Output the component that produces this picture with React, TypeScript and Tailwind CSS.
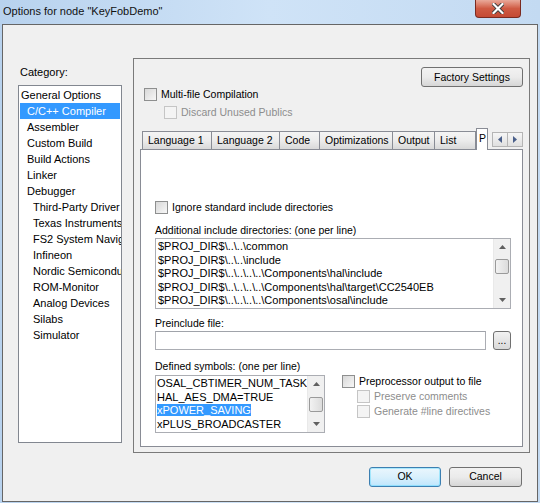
import React from 'react';

const font = { fontFamily: '"Liberation Sans", Arial, sans-serif' };

function Check({ disabled = false }: { disabled?: boolean }) {
  return (
    <span
      className={
        'block w-[13px] h-[13px] border shrink-0 ' +
        (disabled
          ? 'border-[#c5c5c5] bg-[#f4f4f4]'
          : 'border-[#8e8f8f] bg-gradient-to-br from-[#d8d8d8] to-[#f7f7f7]')
      }
    />
  );
}

function ScrollBar({ thumbTop, thumbH }: { thumbTop: number; thumbH: number }) {
  return (
    <div className="w-[17px] h-full bg-[#f0f0f0] border-l border-[#e9e9e9] flex flex-col items-center shrink-0">
      <div className="h-[16px] w-full flex items-center justify-center">
        <svg width="7" height="4" viewBox="0 0 7 4">
          <path d="M0 4 L3.5 0 L7 4 Z" fill="#606060" />
        </svg>
      </div>
      <div className="flex-1 w-full relative">
        <div
          className="absolute left-[1px] right-[1px] rounded-[2px] border border-[#9a9a9a] bg-gradient-to-r from-[#f2f2f2] to-[#dcdcdc]"
          style={{ top: thumbTop, height: thumbH }}
        />
      </div>
      <div className="h-[16px] w-full flex items-center justify-center">
        <svg width="7" height="4" viewBox="0 0 7 4">
          <path d="M0 0 L3.5 4 L7 0 Z" fill="#606060" />
        </svg>
      </div>
    </div>
  );
}

const categories: [string, number][] = [
  ['General Options', 0],
  ['C/C++ Compiler', 1],
  ['Assembler', 1],
  ['Custom Build', 1],
  ['Build Actions', 1],
  ['Linker', 1],
  ['Debugger', 1],
  ['Third-Party Driver', 2],
  ['Texas Instruments', 2],
  ['FS2 System Navigator', 2],
  ['Infineon', 2],
  ['Nordic Semiconductor', 2],
  ['ROM-Monitor', 2],
  ['Analog Devices', 2],
  ['Silabs', 2],
  ['Simulator', 2],
];

const tabs: [string, string][] = [
  ['Language 1', 'w-[70px]'],
  ['Language 2', 'w-[69px]'],
  ['Code', 'w-[41px]'],
  ['Optimizations', 'w-[74px]'],
  ['Output', 'w-[43px]'],
  ['List', 'w-[42px]'],
];

const includes = [
  '$PROJ_DIR$\\..\\..\\common',
  '$PROJ_DIR$\\..\\..\\include',
  '$PROJ_DIR$\\..\\..\\..\\..\\Components\\hal\\include',
  '$PROJ_DIR$\\..\\..\\..\\..\\Components\\hal\\target\\CC2540EB',
  '$PROJ_DIR$\\..\\..\\..\\..\\Components\\osal\\include',
];

const symbols = ['OSAL_CBTIMER_NUM_TASKS=1', 'HAL_AES_DMA=TRUE', 'xPOWER_SAVING', 'xPLUS_BROADCASTER'];

export default function App() {
  return (
    <div
      className="w-[540px] h-[503px] overflow-hidden flex flex-col bg-gradient-to-r from-[#b8d2ee] via-[#cfe3f7] to-[#c3daf2] text-[10.5px] text-black"
      style={font}
    >
      {/* title bar */}
      <div className="h-[24px] flex items-start shrink-0">
        <div className="pl-[3px] pt-[4px] text-[11px] leading-[14px] text-[#111]">
          Options for node "KeyFobDemo"
        </div>
        <div className="ml-auto mr-[19px] w-[46px] h-[18px] rounded-b-[4px] border border-t-0 border-[#7a2a20] bg-gradient-to-b from-[#e9a99a] via-[#cf5a43] to-[#c44a34] flex items-center justify-center">
          <svg width="12" height="11" viewBox="0 0 12 11">
            <path d="M1.5 1 L10.5 10 M10.5 1 L1.5 10" stroke="#3b3b3b" strokeWidth="4" strokeLinecap="square" />
            <path d="M1.5 1 L10.5 10 M10.5 1 L1.5 10" stroke="#ffffff" strokeWidth="2.2" strokeLinecap="square" />
          </svg>
        </div>
      </div>

      {/* client area */}
      <div className="mx-[2px] h-[478px] border border-[#666] bg-[#f0f0f0] flex flex-col shrink-0">
        <div className="flex pt-[33px] pl-[15px]">
          {/* category column */}
          <div className="flex flex-col w-[104px]">
            <div className="mt-[8px] ml-[2px] h-[13px] leading-[13px] text-[11px]">Category:</div>
            <div className="mt-[6px] h-[358px] bg-white border border-[#828790] pt-[1px] overflow-hidden text-[11px]">
              {categories.map(([name, lvl], i) => (
                <div
                  key={name}
                  className={
                    'h-[16px] leading-[16px] whitespace-nowrap overflow-hidden ' +
                    (i === 1 ? 'mx-[1px] bg-[#3399ff] text-white ' : '') +
                    (lvl === 0 ? 'pl-[2px]' : lvl === 1 ? (i === 1 ? 'pl-[7px]' : 'pl-[8px]') : 'pl-[14px]')
                  }
                >
                  {name}
                </div>
              ))}
            </div>
          </div>

          {/* options panel */}
          <div className="ml-[11px] w-[397px] h-[395px] border border-[#7a7a7a] flex flex-col">
            <div className="flex justify-end pr-[6px] pt-[8px]">
              <button className="w-[102px] h-[20px] rounded-[3px] border border-[#707070] bg-gradient-to-b from-[#f2f2f2] via-[#ebebeb] to-[#d6d6d6] text-[10.5px] leading-[18px]">
                Factory Settings
              </button>
            </div>
            <div className="flex items-center pl-[10px] mt-[1px] h-[13px]">
              <Check />
              <span className="ml-[4px]">Multi-file Compilation</span>
            </div>
            <div className="flex items-center pl-[30px] mt-[5px] h-[13px] text-[#8d8d8d]">
              <Check disabled />
              <span className="ml-[4px]">Discard Unused Publics</span>
            </div>

            {/* tab strip */}
            <div className="mt-[9px] h-[21px] flex items-end pl-[8px] relative">
              {tabs.map(([t, w]) => (
                <div
                  key={t}
                  className={
                    w +
                    ' h-[18px] -mr-[1px] border border-b-0 border-[#898c95] bg-gradient-to-b from-[#f4f4f4] via-[#ececec] to-[#d9d9d9] pl-[5px] leading-[17px] whitespace-nowrap overflow-hidden'
                  }
                >
                  {t}
                </div>
              ))}
              <div className="w-[12px] h-[22px] -mb-[1px] ml-[1px] border border-b-0 border-[#898c95] bg-white pl-[2px] pt-[3px] leading-[13px] overflow-hidden whitespace-nowrap z-10">
                P
              </div>
              <div className="absolute right-[6px] top-[4px] flex">
                <div className="w-[16px] h-[15px] border border-[#b5b5b5] bg-gradient-to-b from-[#f6f6f6] to-[#e0e0e0] flex items-center justify-center">
                  <svg width="4" height="7" viewBox="0 0 4 7">
                    <path d="M4 0 L0 3.5 L4 7 Z" fill="#4a5f8a" />
                  </svg>
                </div>
                <div className="w-[16px] h-[15px] -ml-[1px] border border-[#b5b5b5] bg-gradient-to-b from-[#f6f6f6] to-[#e0e0e0] flex items-center justify-center">
                  <svg width="4" height="7" viewBox="0 0 4 7">
                    <path d="M0 0 L4 3.5 L0 7 Z" fill="#4a5f8a" />
                  </svg>
                </div>
              </div>
            </div>

            {/* tab page */}
            <div className="ml-[6px] w-[383px] h-[298px] border border-[#898c95] bg-white flex flex-col pl-[14px]">
              <div className="mt-[51px] flex items-center h-[13px]">
                <Check />
                <span className="ml-[4px]">Ignore standard include directories</span>
              </div>
              <div className="mt-[10px] h-[13px] leading-[13px]">Additional include directories: (one per line)</div>
              <div className="mt-[1px] w-[356px] h-[71px] border border-[#abadb3] flex text-[11px]">
                <div className="flex-1 pl-[2px] pt-[1px] overflow-hidden">
                  {includes.map((l) => (
                    <div key={l} className="h-[13.5px] leading-[13.5px] whitespace-nowrap">
                      {l}
                    </div>
                  ))}
                </div>
                <ScrollBar thumbTop={4} thumbH={15} />
              </div>

              <div className="mt-[8px] h-[13px] leading-[13px]">Preinclude file:</div>
              <div className="mt-[1px] flex items-start">
                <div className="w-[331px] h-[19px] border border-[#abadb3] border-t-[#a0a3aa]" />
                <button className="ml-[7px] w-[18px] h-[19px] rounded-[3px] border border-[#707070] bg-gradient-to-b from-[#f2f2f2] to-[#d9d9d9] text-[10px] leading-[14px]">
                  ...
                </button>
              </div>

              <div className="mt-[10px] h-[13px] leading-[13px]">Defined symbols: (one per line)</div>
              <div className="mt-[2px] flex items-start">
                <div className="w-[170px] h-[58px] border border-[#abadb3] flex text-[11px]">
                  <div className="flex-1 pl-[1px] pt-[1px] overflow-hidden">
                    {symbols.map((s, i) => (
                      <div key={s} className="h-[13.5px] leading-[13.5px] whitespace-nowrap">
                        <span className={i === 2 ? 'bg-[#3399ff] text-white' : ''}>{s}</span>
                      </div>
                    ))}
                  </div>
                  <ScrollBar thumbTop={5} thumbH={15} />
                </div>
                <div className="ml-[17px] flex flex-col">
                  <div className="flex items-center h-[13px]">
                    <Check />
                    <span className="ml-[4px]">Preprocessor output to file</span>
                  </div>
                  <div className="flex items-center h-[13px] mt-[2px] ml-[15px] text-[#8d8d8d]">
                    <Check disabled />
                    <span className="ml-[4px]">Preserve comments</span>
                  </div>
                  <div className="flex items-center h-[13px] mt-[2px] ml-[15px] text-[#8d8d8d]">
                    <Check disabled />
                    <span className="ml-[4px]">Generate #line directives</span>
                  </div>
                </div>
              </div>
            </div>
          </div>
        </div>

        {/* dialog buttons */}
        <div className="flex justify-end pr-[15px] mt-[14px] gap-[8px]">
          <button className="w-[72px] h-[20px] rounded-[3px] border border-[#3c7fb1] bg-gradient-to-b from-[#eaf6fd] via-[#d9f0fc] to-[#bee6fd] text-[10.5px] shadow-[inset_0_0_0_1px_#48d4fd66]">
            OK
          </button>
          <button className="w-[73px] h-[20px] rounded-[3px] border border-[#707070] bg-gradient-to-b from-[#f2f2f2] via-[#ebebeb] to-[#d6d6d6] text-[10.5px]">
            Cancel
          </button>
        </div>
      </div>
    </div>
  );
}
